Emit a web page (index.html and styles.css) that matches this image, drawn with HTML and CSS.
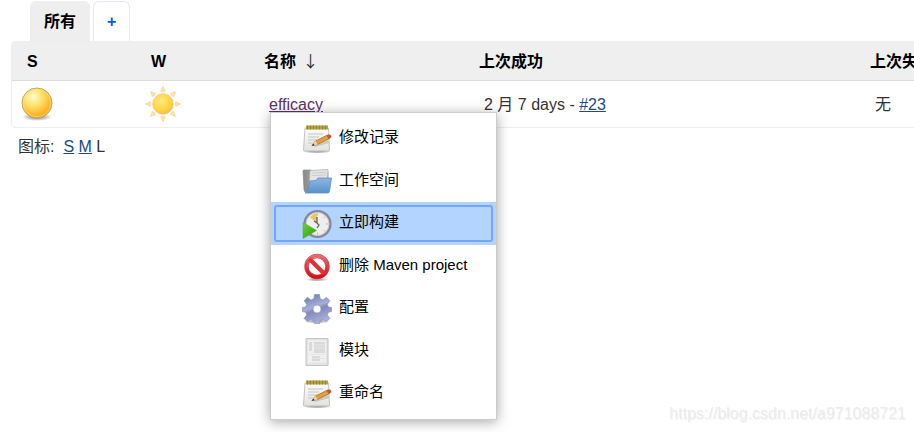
FILE: index.html
```
<!DOCTYPE html>
<html lang="zh-CN">
<head>
<meta charset="utf-8">
<title>所有</title>
<link rel="stylesheet" href="styles.css">
</head>
<body>
<svg class="defs" aria-hidden="true">
  <defs>
    <radialGradient id="ball" cx=".38" cy=".3" r=".75"><stop offset="0" stop-color="#fffbd0"/><stop offset=".4" stop-color="#fbe26a"/><stop offset=".75" stop-color="#ffb92f"/><stop offset="1" stop-color="#f2a125"/></radialGradient>
    <radialGradient id="shade"><stop offset=".4" stop-color="#777" stop-opacity=".6"/><stop offset="1" stop-color="#777" stop-opacity="0"/></radialGradient>
    <radialGradient id="sun" cx=".4" cy=".35" r=".7"><stop offset="0" stop-color="#ffe987"/><stop offset=".6" stop-color="#ffd642"/><stop offset="1" stop-color="#fdb94a"/></radialGradient>
    <linearGradient id="paper" x2="0" y2="1"><stop offset="0" stop-color="#fcfcfb"/><stop offset="1" stop-color="#e2e2e0"/></linearGradient>
    <linearGradient id="folder" x2="0" y2="1"><stop offset="0" stop-color="#8db8e3"/><stop offset="1" stop-color="#5a90cd"/></linearGradient>
    <linearGradient id="metal" x2="1" y2="0"><stop offset="0" stop-color="#858988"/><stop offset="1" stop-color="#c5c7c6"/></linearGradient>
    <linearGradient id="cog" x2=".4" y2="1"><stop offset="0" stop-color="#5e72a9"/><stop offset=".5" stop-color="#a5b0d7"/><stop offset=".62" stop-color="#8588b9"/><stop offset="1" stop-color="#a6b0d8"/></linearGradient>
    <linearGradient id="stop" x2="0" y2="1"><stop offset="0" stop-color="#e96a70"/><stop offset="1" stop-color="#d70f16"/></linearGradient>
    <linearGradient id="play" x2="1" y2="1"><stop offset="0" stop-color="#6ad43a"/><stop offset="1" stop-color="#2c9b0b"/></linearGradient>
    <symbol id="notepad" viewBox="0 0 30 30">
      <ellipse cx="15" cy="27.500" rx="14" ry="2" fill="url(#shade)"/>
      <path d="M3 4h23.500l1 22q0 1-1 1H2.500q-1 0-1-1z" fill="url(#paper)" stroke="#b5b5b5" stroke-width=".8"/>
      <path d="M4 1.500h22v4H4z" fill="#b4a13e"/>
      <path d="M5.500 1.500v4M8.500 1.500v4M11.500 1.500v4M14.500 1.500v4M17.500 1.500v4M20.500 1.500v4M23.500 1.500v4" stroke="#96863a"/>
      <path d="M6 10h15M6 13h11M6 16h9M6 19h5" stroke="#c5c5c5"/>
      <path d="M12 22l14-6 1 3-14 4z" fill="#777" opacity=".3"/>
      <path d="M10 21.500l3.500-4.500 12-6 2 3.500-12 6z" fill="#e2a03a" stroke="#a46b20" stroke-width=".7"/>
      <path d="M10 21.500l3.500-4.500 2 3.500z" fill="#efd8ac"/><path d="M9.500 22l2-2.500 1.200 1.800z" fill="#333"/>
      <path d="M24.500 11.500l2.500-1.300q2.500.3 2.500 3l-3 1.800z" fill="#c9543a"/>
    </symbol>
  </defs>
</svg>

<main class="panel">
  <nav class="tabs" aria-label="视图">
    <a class="tab tab-active" href="#all">所有</a>
    <a class="tab tab-new" href="#new">+</a>
  </nav>

  <table class="projects">
    <colgroup><col class="col-status"><col class="col-weather"><col class="col-name"><col class="col-success"><col class="col-failure"></colgroup>
    <thead>
      <tr><th>S</th><th>W</th><th>名称 <span class="sort">↓</span></th><th>上次成功</th><th>上次失败</th></tr>
    </thead>
    <tbody>
      <tr>
        <td class="icon-cell">
          <svg class="status" viewBox="0 0 32 36" aria-hidden="true"><ellipse cx="16" cy="31" rx="15" ry="4" fill="url(#shade)"/><circle cx="16" cy="17" r="15" fill="url(#ball)" stroke="#b9a950"/><circle cx="16" cy="17" r="13.800" fill="none" stroke="#ffe48a" stroke-opacity=".6"/></svg>
        </td>
        <td class="icon-cell">
          <svg class="weather" viewBox="-18 -18 36 36" aria-hidden="true">
            <g fill="#ffe3a8" stroke="#f9d29a" stroke-width=".8">
              <path id="ray" d="M-2.200-12.800L0-17.500L2.200-12.800Q0-11.500-2.200-12.800z"/>
              <use href="#ray" transform="rotate(45)"/><use href="#ray" transform="rotate(90)"/><use href="#ray" transform="rotate(135)"/><use href="#ray" transform="rotate(180)"/><use href="#ray" transform="rotate(225)"/><use href="#ray" transform="rotate(270)"/><use href="#ray" transform="rotate(315)"/>
            </g>
            <circle r="10.300" fill="url(#sun)" stroke="#f9ca74" stroke-width=".8"/>
          </svg>
        </td>
        <td class="name-cell">
          <a class="visited" href="#efficacy">efficacy</a>
          <ul class="menu">
            <li><a href="#changes"><svg viewBox="0 0 30 30" aria-hidden="true"><use href="#notepad"/></svg><span>修改记录</span></a></li>
            <li><a href="#workspace"><svg viewBox="0 0 30 30" aria-hidden="true">
              <path d="M1 4q0-1 1-1h7l2 2h15v20H4q-2 0-2-2z" fill="url(#metal)" stroke="#8b8b8b" stroke-width=".7"/>
              <path d="M8 3.500l18-1-1 18H7z" fill="#e4e4e4" stroke="#aaa" stroke-width=".7"/><path d="M10 6l14-.7M10 8.500l14-.5" stroke="#cdcdcd"/>
              <path d="M8 14l6-.5 2-2.500h13.500l-2 13.500q-.3 1.500-2 1.500H3q2 0 2.500-3z" fill="url(#folder)" stroke="#5a8cc4" stroke-width=".8"/>
            </svg><span>工作空间</span></a></li>
            <li class="selected"><a href="#build"><svg viewBox="0 0 30 30" aria-hidden="true">
              <circle cx="15.500" cy="15" r="12.800" fill="#eeeeeb" stroke="#85889d" stroke-width="2.600"/><circle cx="15.500" cy="15" r="11.500" fill="none" stroke="#cacbd4"/>
              <path d="M15 14L8 8.500q3-4 7-4z" fill="#e7c667"/><path d="M15 8v6l-3-2M15 14l2 2-2 3" fill="none" stroke="#666" stroke-width="1.300"/>
              <path d="M15.500 4.500v2M26 15h-2M23 7.500l-1.500 1.500M23 22.500L21.500 21M15.500 25.500v-2" stroke="#bbb"/>
              <path d="M1 13.500L14.500 21.500 1 29.500z" fill="url(#play)" stroke="#5aa83c" stroke-width=".6"/>
            </svg><span>立即构建</span></a></li>
            <li><a href="#delete"><svg viewBox="0 0 30 30" aria-hidden="true">
              <ellipse cx="15" cy="27.500" rx="11" ry="2" fill="url(#shade)"/><circle cx="15" cy="14.500" r="10.500" fill="none" stroke="#cf555a" stroke-width="4.400"/><path d="M7.500 7l15 15" stroke="#cf555a" stroke-width="4.400"/>
              <circle cx="15" cy="14.500" r="10.500" fill="none" stroke="url(#stop)" stroke-width="3.400"/><path d="M7.500 7l15 15" stroke="#e12d34" stroke-width="3.400"/>
            </svg><span>删除 Maven project</span></a></li>
            <li><a href="#configure"><svg viewBox="-15 -15 30 30" aria-hidden="true">
              <ellipse cy="12" rx="12" ry="3" fill="url(#shade)"/>
              <path fill="url(#cog)" stroke="#858cb6" stroke-width=".6" fill-rule="evenodd" d="M-2.500-14.500h5l.7 4.300 2.800 1.200 3.500-2.700 3.400 3.400-2.600 3.600 1.100 2.700 3.300.5v4l-3.300.8-1.100 2.600 2.600 3.500-3.400 3.400-3.500-2.500-2.800 1.100-.7 3.200h-5l-.7-3.200-2.800-1.100-3.500 2.500-3.400-3.400 2.600-3.500-1.100-2.600-3.300-.8v-4l3.300-.5 1.100-2.700-2.600-3.600 3.400-3.400 3.500 2.700 2.800-1.200zM4 0A4 4 0 1 0-4 0A4 4 0 1 0 4 0z"/>
            </svg><span>配置</span></a></li>
            <li><a href="#modules"><svg viewBox="0 0 30 30" aria-hidden="true">
              <path d="M4 1.500h22v27H4z" fill="#e4e4e4" stroke="#c2c2c2"/><path d="M6 3.500h18v22H6z" fill="#f0f0f0"/><path d="M7 5h3v9H7zM12 5h11v11H12zM10 19h8v5h-8z" fill="#dadada"/><path d="M12 8h11M12 11h11M7 17.500h16M10 21.500h13" stroke="#e6e6e6"/>
            </svg><span>模块</span></a></li>
            <li><a href="#rename"><svg viewBox="0 0 30 30" aria-hidden="true"><use href="#notepad"/></svg><span>重命名</span></a></li>
          </ul>
        </td>
        <td>2 月 7 days - <a href="#23">#23</a></td>
        <td>无</td>
      </tr>
    </tbody>
  </table>

  <div class="sizes"><span class="sizes-label">图标:</span><a href="#s">S</a> <a href="#m">M</a> L</div>
</main>
<footer class="watermark">https://blog.csdn.net/a971088721</footer>
</body>
</html>
```

FILE: styles.css
```
* { box-sizing: border-box; }

body {
  margin: 0;
  min-height: 100vh;
  overflow: hidden;
  background: #fff;
  color: #333;
  font: 16px/20px "Liberation Sans", "Noto Sans CJK SC", sans-serif;
}

a { color: #204a87; }
a.visited { color: #5c3566; }
svg { display: block; }
.defs { position: absolute; width: 0; height: 0; }

.panel { padding: 1px 0 0 11px; }

.tabs { display: flex; gap: 3px; padding-left: 19px; }
.tab {
  padding: 11px 13px 9px;
  border-radius: 6px 6px 0 0;
  font-weight: bold;
  text-decoration: none;
}
.tab-active { background: #eee; color: #000; padding: 11px 14px 9px; }
.tab-new {
  border: 1px solid #d9ebfb;
  border-bottom: 0;
  padding: 10px 13px 9px;
  color: #0b5bd3;
}

.projects {
  width: 125%;
  table-layout: fixed;
  border: 1px solid #eee;
  border-radius: 4px;
  border-spacing: 0;
}
.col-status { width: 124px; }
.col-weather { width: 113px; }
.col-name { width: 215px; }
.col-success { width: 391px; }

th {
  padding: 10px 15px 8px;
  border-bottom: 1px solid #dcdcdc;
  background: #efefef;
  color: #000;
  text-align: left;
}
.sort {
  margin-left: 2px;
  color: #333;
  font-family: "Noto Sans CJK SC", sans-serif;
  font-weight: normal;
  line-height: 1;
}

td { padding: 6px 20px 4px; }
.icon-cell { padding: 5px 9px; }
.status { width: 32px; height: 36px; }
.weather { width: 36px; height: 36px; }
.name-cell { position: relative; }

.menu {
  position: absolute;
  top: 31px;
  left: 21px;
  width: max-content;
  margin: 0;
  padding: 4px 0;
  border: 1px solid #ccc;
  background: #fff;
  box-shadow: 0 2px 12px rgba(0, 0, 0, 0.35);
  list-style: none;
  font-size: 15px;
}
.menu a {
  display: flex;
  align-items: center;
  gap: 7px;
  height: 37px;
  padding: 0 24px 0 26px;
  border: 2px solid transparent;
  border-radius: 3px;
  color: #000;
  text-decoration: none;
}
.menu li { padding: 3px; }
.menu li:nth-child(even) { padding-bottom: 2px; }
.menu svg { width: 30px; height: 30px; }
.menu span { padding-bottom: 4px; }
.menu .selected { background: #b3d4ff; }
.menu .selected a { border-color: #72a7fb; }

.sizes { padding: 9px 7px; }
.sizes-label { margin-right: 9px; }

.watermark {
  position: fixed;
  right: 8px;
  bottom: 8px;
  color: #ebebeb;
  text-shadow: 1px 1px 0 #f4f4f4;
}
```
